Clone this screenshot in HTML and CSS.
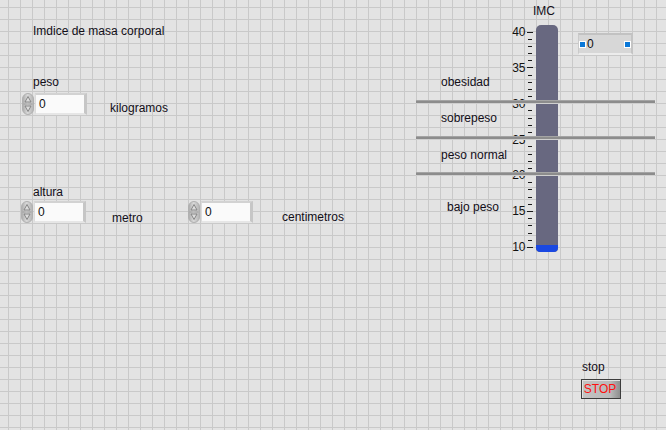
FILE: index.html
```html
<!DOCTYPE html>
<html lang="es">
<head>
<meta charset="utf-8">
<title>Indice de masa corporal</title>
<link rel="stylesheet" href="styles.css">
</head>
<body>
<div class="panel">
  <div class="txt title">Imdice de masa corporal</div>

  <div class="txt lbl-peso">peso</div>
  <div class="num num-peso">
    <svg class="spin" width="12" height="22" viewBox="0 0 12 22">
      <defs><linearGradient id="sg" x1="0" y1="0" x2="1" y2="0"><stop offset="0" stop-color="#a9a9a9"/><stop offset="0.45" stop-color="#d9d9d9"/><stop offset="1" stop-color="#b4b4b4"/></linearGradient></defs>
      <rect x="0.5" y="0.5" width="11" height="21" rx="5.5" fill="url(#sg)" stroke="#b0b0b0"/>
      <line x1="1.5" y1="11" x2="10.5" y2="11" stroke="#a0a0a0"/>
      <path d="M6 3.5 L9 9 L3 9 Z" fill="#dcdcdc" stroke="#7e7e7e" stroke-width="0.9"/>
      <path d="M3 13 L9 13 L6 18.5 Z" fill="#dcdcdc" stroke="#7e7e7e" stroke-width="0.9"/>
    </svg>
    <div class="box">0</div>
  </div>
  <div class="txt lbl-kg">kilogramos</div>

  <div class="txt lbl-alt">altura</div>
  <div class="num num-alt">
    <svg class="spin" width="12" height="22" viewBox="0 0 12 22">
      <rect x="0.5" y="0.5" width="11" height="21" rx="5.5" fill="url(#sg)" stroke="#b0b0b0"/>
      <line x1="1.5" y1="11" x2="10.5" y2="11" stroke="#a0a0a0"/>
      <path d="M6 3.5 L9 9 L3 9 Z" fill="#dcdcdc" stroke="#7e7e7e" stroke-width="0.9"/>
      <path d="M3 13 L9 13 L6 18.5 Z" fill="#dcdcdc" stroke="#7e7e7e" stroke-width="0.9"/>
    </svg>
    <div class="box">0</div>
  </div>
  <div class="txt lbl-m">metro</div>

  <div class="num num-cm">
    <svg class="spin" width="12" height="22" viewBox="0 0 12 22">
      <rect x="0.5" y="0.5" width="11" height="21" rx="5.5" fill="url(#sg)" stroke="#b0b0b0"/>
      <line x1="1.5" y1="11" x2="10.5" y2="11" stroke="#a0a0a0"/>
      <path d="M6 3.5 L9 9 L3 9 Z" fill="#dcdcdc" stroke="#7e7e7e" stroke-width="0.9"/>
      <path d="M3 13 L9 13 L6 18.5 Z" fill="#dcdcdc" stroke="#7e7e7e" stroke-width="0.9"/>
    </svg>
    <div class="box">0</div>
  </div>
  <div class="txt lbl-cm">centimetros</div>

  <div class="txt lbl-imc">IMC</div>
  <svg class="scale" width="40" height="240" viewBox="500 20 40 240">
    <g font-family="Liberation Sans, Arial, sans-serif" font-size="12" fill="#111" text-anchor="end">
      <text x="525.5" y="35.8">40</text>
      <text x="525.5" y="71.7">35</text>
      <text x="525.5" y="107.6">30</text>
      <text x="525.5" y="143.5">25</text>
      <text x="525.5" y="179.4">20</text>
      <text x="525.5" y="215.3">15</text>
      <text x="525.5" y="251.2">10</text>
    </g>
    <path stroke="#1a1a1a" stroke-width="1" fill="none"
      d="M527 32.5h6M528 39.5h4M528 46.5h4M528 53.5h4M528 60.5h4
         M527 67.5h6M528 75.5h4M528 82.5h4M528 89.5h4M528 96.5h4
         M527 103.5h6M528 110.5h4M528 118.5h4M528 125.5h4M528 132.5h4
         M527 139.5h6M528 146.5h4M528 154.5h4M528 161.5h4M528 168.5h4
         M527 175.5h6M528 182.5h4M528 189.5h4M528 197.5h4M528 204.5h4
         M527 211.5h6M528 218.5h4M528 225.5h4M528 233.5h4M528 240.5h4
         M527 247.5h6"/>
  </svg>
  <div class="tank"><div class="fill"></div></div>

  <div class="txt obes">obesidad</div>
  <div class="txt sobre">sobrepeso</div>
  <div class="txt normal">peso normal</div>
  <div class="txt bajo">bajo peso</div>

  <div class="hline l1"></div>
  <div class="hline l2"></div>
  <div class="hline l3"></div>

  <div class="ind">
    <span class="handle"></span>
    <span class="ind-val">0</span>
    <span class="handle"></span>
  </div>

  <div class="txt lbl-stop">stop</div>
  <div class="stop">STOP</div>
</div>
</body>
</html>
```

FILE: styles.css
```css
html, body {
  margin: 0;
  padding: 0;
}
body {
  width: 666px;
  height: 430px;
  overflow: hidden;
  background-color: #e3e3e3;
  background-image:
    linear-gradient(to right, #c9c9c9 0, #c9c9c9 1px, transparent 1px),
    linear-gradient(to bottom, #c9c9c9 0, #c9c9c9 1px, transparent 1px);
  background-size: 12px 12px;
  background-position: 8px 7px;
  font-family: "Liberation Sans", Arial, sans-serif;
  font-size: 12px;
  line-height: 14px;
  color: #120e18;
}
.panel {
  position: relative;
  width: 666px;
  height: 430px;
}
.txt {
  position: absolute;
  white-space: nowrap;
}
.title { left: 33px; top: 24px; }
.lbl-peso { left: 33px; top: 75px; }
.lbl-kg { left: 110px; top: 101px; }
.lbl-alt { left: 33px; top: 185px; }
.lbl-m { left: 112px; top: 211px; }
.lbl-cm { left: 282px; top: 210px; }
.lbl-imc { left: 533px; top: 4px; }
.obes { left: 441px; top: 75px; }
.sobre { left: 441px; top: 111px; }
.normal { left: 441px; top: 148px; }
.bajo { left: 447px; top: 200px; }
.lbl-stop { left: 582px; top: 360px; }

.num {
  position: absolute;
  display: flex;
  align-items: center;
  height: 22px;
}
.num-peso { left: 22px; top: 93px; }
.num-alt { left: 21px; top: 201px; }
.num-cm { left: 188px; top: 201px; }
.spin { display: block; }
.box {
  box-sizing: border-box;
  width: 52px;
  height: 22px;
  margin-left: 1px;
  padding-left: 3px;
  display: flex;
  align-items: center;
  background: #fafafa;
  border-style: solid;
  border-width: 2px 3px 2px 1px;
  border-color: #d2d2d2 #c6c6c6 #e6e6e6 #dcdcdc;
  color: #101010;
}

.scale {
  position: absolute;
  left: 500px;
  top: 20px;
}
.tank {
  position: absolute;
  left: 536px;
  top: 25px;
  width: 22px;
  height: 227px;
  background: #686880;
  border-radius: 5px 5px 4px 4px;
  display: flex;
  flex-direction: column;
  justify-content: flex-end;
  overflow: hidden;
}
.fill {
  height: 7px;
  background: #1a48e2;
  border-radius: 0 0 4px 4px;
}

.hline {
  position: absolute;
  left: 416px;
  width: 239px;
  height: 2px;
  background: #8c8c8c;
  border-top: 1px solid #a4a4a4;
  border-bottom: 1px solid #cfcfcf;
  box-sizing: content-box;
}
.l1 { top: 100px; }
.l2 { top: 136px; }
.l3 { top: 172px; }

.ind {
  position: absolute;
  left: 578px;
  top: 33px;
  width: 55px;
  height: 22px;
  box-sizing: border-box;
  display: flex;
  align-items: center;
  background: #d7d7d7;
  border-top: 2px solid #c2c2c2;
  border-left: 1px solid #cacaca;
  border-right: 2px solid #c4c4c4;
  border-bottom: 2px solid #ececec;
}
.handle {
  width: 5px;
  height: 5px;
  background: #0a78d8;
  border: 1px solid #ffffff;
  flex: none;
}
.ind-val {
  flex: 1;
  padding-left: 1px;
  color: #101010;
}

.stop {
  position: absolute;
  left: 581px;
  top: 379px;
  width: 40px;
  height: 20px;
  box-sizing: border-box;
  border: 1px solid #3c3c3c;
  background: linear-gradient(to right, #c4c4c4 0%, #b9b9b9 75%, #8e8e8e 100%);
  box-shadow: inset 1px 1px 0 #e2e2e2;
  color: #ff1010;
  display: flex;
  align-items: center;
  justify-content: center;
  padding-right: 2px;
}
```
